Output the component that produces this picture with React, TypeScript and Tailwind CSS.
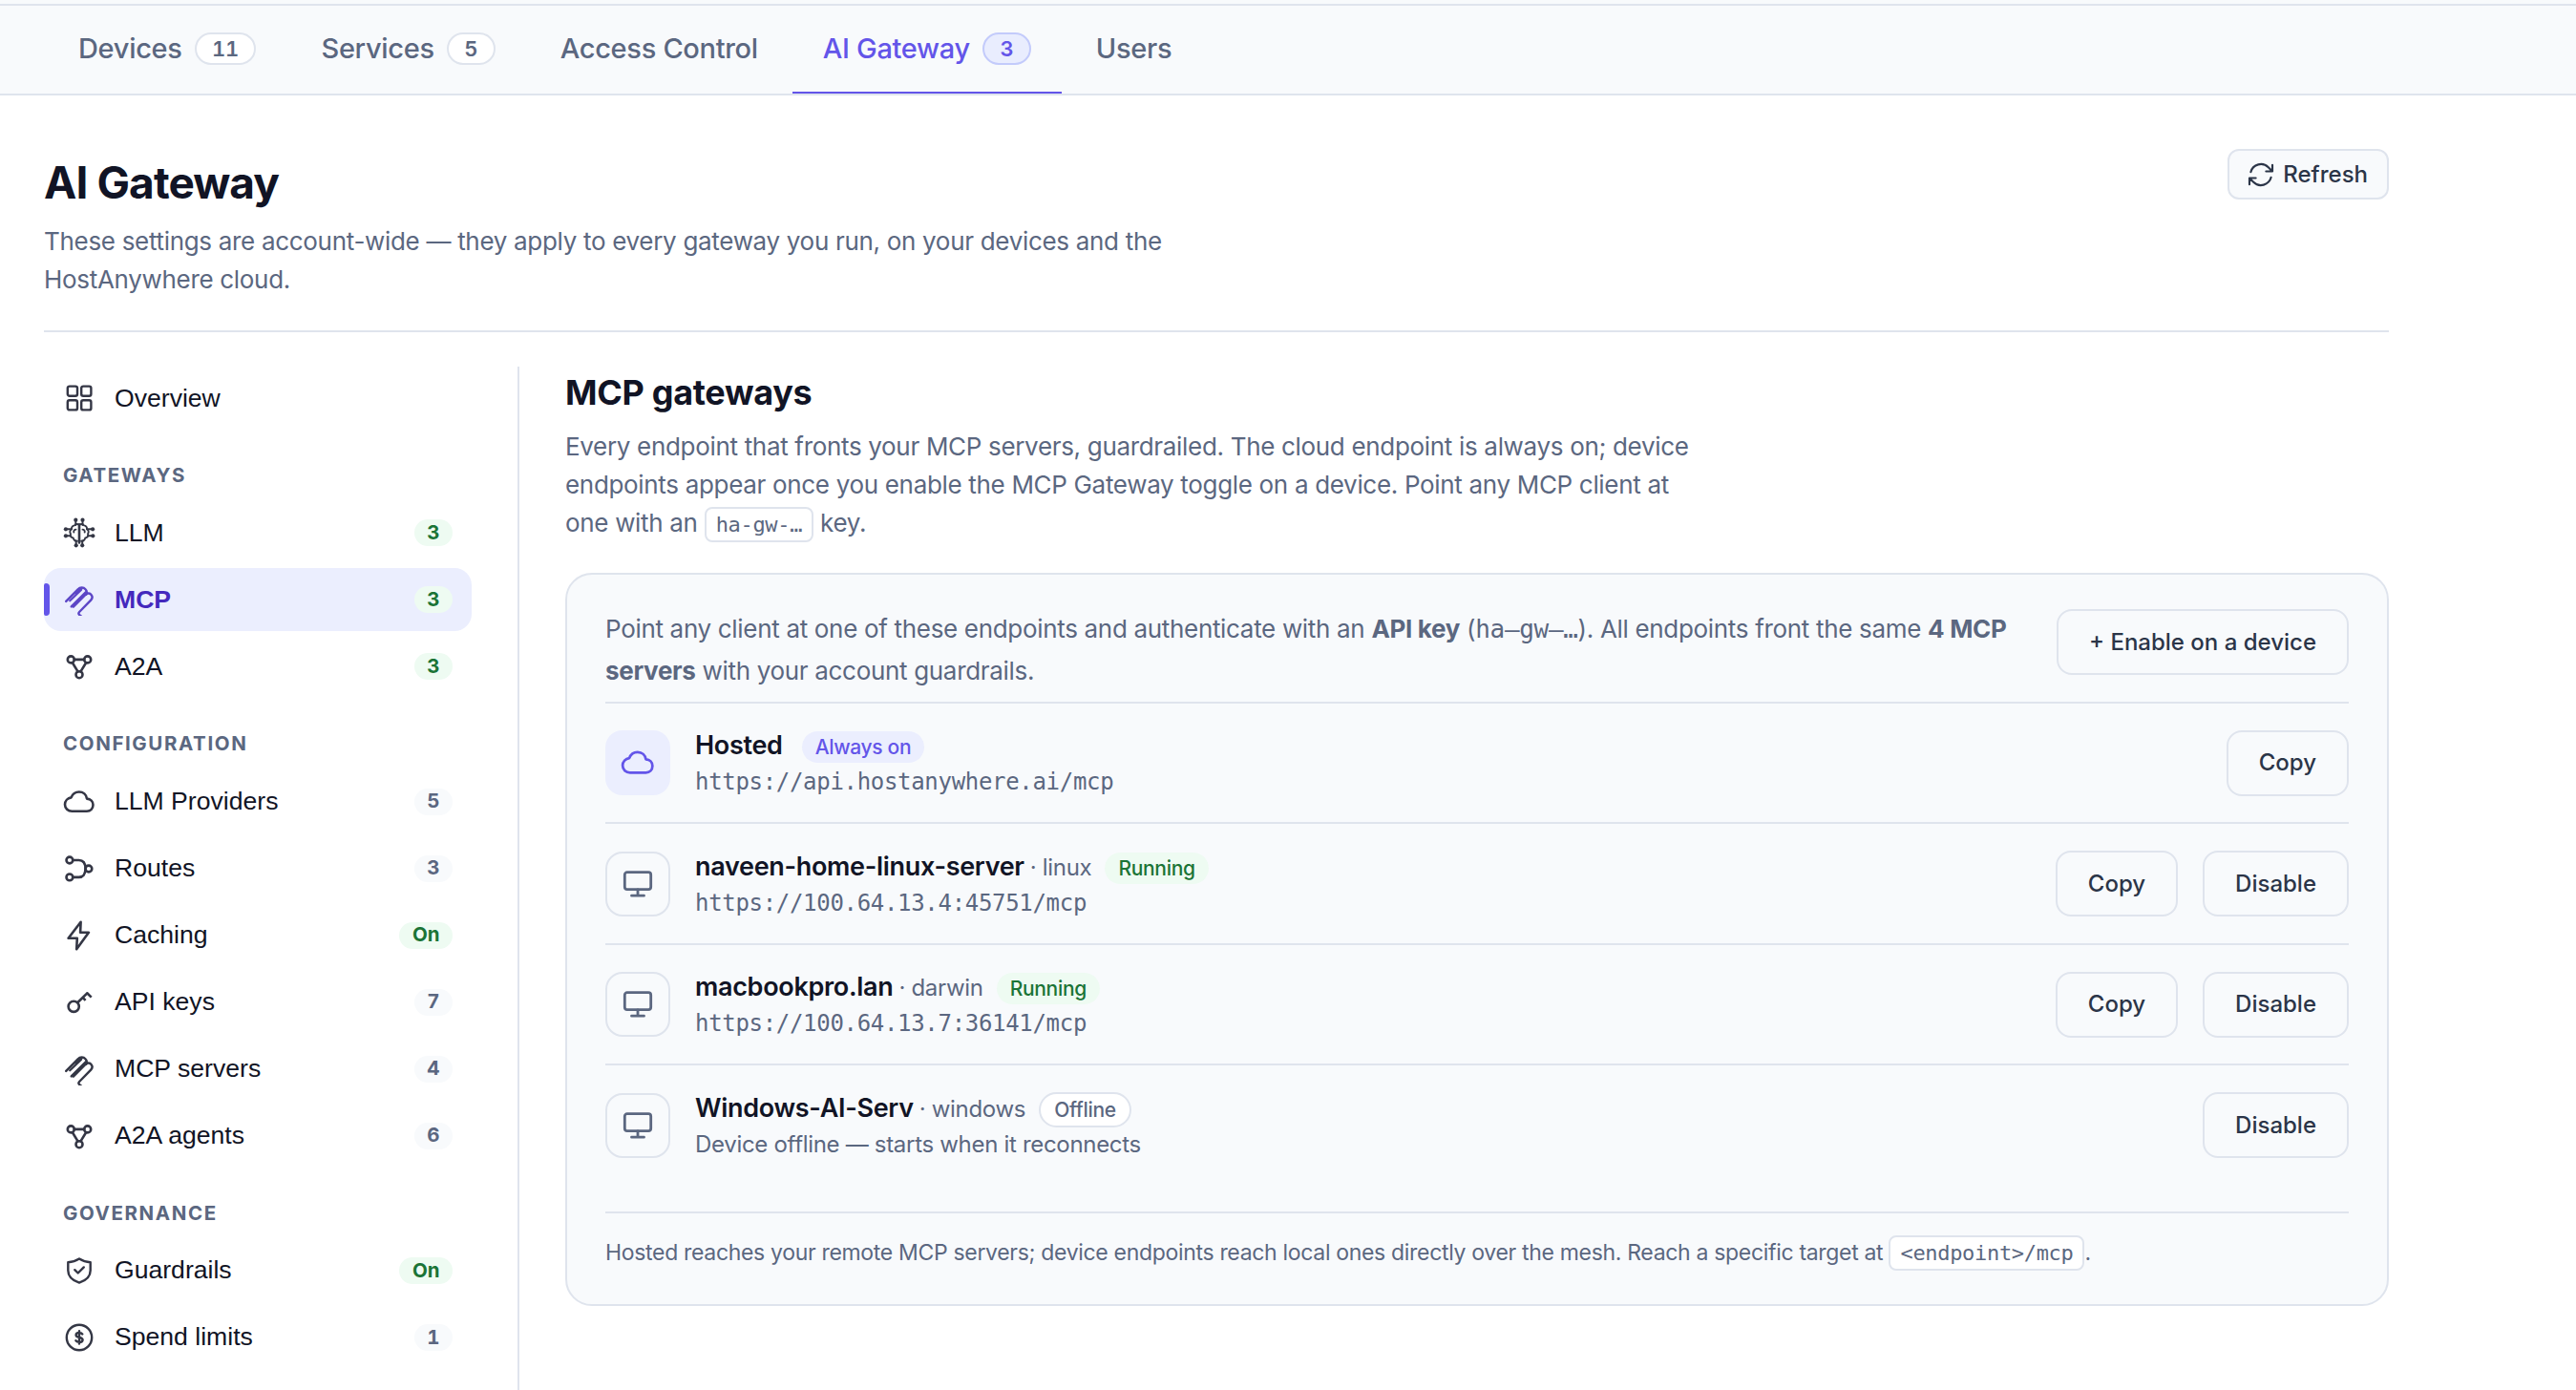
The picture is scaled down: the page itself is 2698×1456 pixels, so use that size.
import React from "react";
import clsx from "clsx";

type IconProps = { className?: string };

const strokeProps = {
  fill: "none",
  stroke: "currentColor",
  strokeWidth: 2.4,
  strokeLinecap: "round",
  strokeLinejoin: "round",
} as const;

const GridIcon = ({ className }: IconProps) => (
  <svg viewBox="0 0 34 34" className={className} {...strokeProps}>
    <rect x="4.8" y="4.6" width="10.2" height="10.2" rx="2" />
    <rect x="19.2" y="4.6" width="10.2" height="10.2" rx="2" />
    <rect x="4.8" y="19.2" width="10.2" height="10.2" rx="2" />
    <rect x="19.2" y="19.2" width="10.2" height="10.2" rx="2" />
  </svg>
);

const BrainIcon = ({ className }: IconProps) => (
  <svg viewBox="0 0 34 34" className={className} {...strokeProps} strokeWidth={1.9}>
    <path d="M17 8.5v19" strokeWidth={2.6} />
    <path d="M17 8.8c-1.6-1.4-4-1-4.9.6-2 .2-3.4 1.9-3.1 3.8-1.8 1-2.2 3.3-1.1 4.9-.4 2.2.8 4 2.8 4.4.5 2.3 2.5 3.6 4.3 3.2M17 8.8c1.6-1.4 4-1 4.9.6 2 .2 3.4 1.9 3.1 3.8 1.8 1 2.2 3.3 1.1 4.9.4 2.2-.8 4-2.8 4.4-.5 2.3-2.5 3.6-4.3 3.2" />
    <path d="M11.3 16.6c-.3-1.7.6-2.9 2.2-3M22.7 16.6c.3-1.7-.6-2.9-2.2-3" />
    <path d="M13.3 4v5M20.5 4v5M3 13.3h6M3.3 20.3h4.4M31 13.3h-6M30.7 20.3h-4.4M13.7 30v-4.5M20.2 30v-4.5" />
    <g fill="currentColor" stroke="none">
      <circle cx="13.3" cy="3.7" r="2.1" />
      <circle cx="20.5" cy="3.7" r="2.1" />
      <circle cx="2.9" cy="13.3" r="2.1" />
      <circle cx="2.9" cy="20.3" r="2.1" />
      <circle cx="31.1" cy="13.3" r="2.1" />
      <circle cx="31.3" cy="20.3" r="2.1" />
      <circle cx="13.7" cy="30.3" r="2.1" />
      <circle cx="20.2" cy="30.3" r="2.1" />
    </g>
  </svg>
);

const McpIcon = ({ className }: IconProps) => (
  <svg viewBox="0 0 34 34" className={className} {...strokeProps}>
    <path d="M3.2 18.9 15.6 6.3c2.3-2.3 5.9-2.3 7.9 0 1.5 1.6 1.6 3.7.6 5.5" />
    <path d="M7.2 18.3 19.2 6.6M13.5 10.8 19.6 5.2" strokeWidth={2.2} />
    <path d="M8.8 24.4 23.9 9.4" strokeWidth={2.6} />
    <path d="M10.8 24.6 24 11.5c1.6-1.5 4.2-1.2 5.5.4 1.5 1.8 1.3 4-.3 5.7L17.1 30c-.9 1-.8 2.3.2 3.2l1.4 1" />
  </svg>
);

const AgentsIcon = ({ className }: IconProps) => (
  <svg viewBox="0 0 34 34" className={className} {...strokeProps} strokeWidth={2.6}>
    <circle cx="8.3" cy="9.9" r="3.5" />
    <circle cx="25.7" cy="9.9" r="3.5" />
    <circle cx="17" cy="25.7" r="3.5" />
    <path d="M11.8 9.9h10.4M9.9 13.2l5.6 9.2M24.1 13.2l-5.6 9.2" />
  </svg>
);

const CloudIcon = ({ className }: IconProps) => (
  <svg viewBox="0 0 34 34" className={className} {...strokeProps} strokeWidth={2.6}>
    <path d="M9.3 26.7C5.2 26.7 2 23.7 2 19.7c0-3.8 2.9-6.8 6.6-7.3 1.4-3.7 4.4-5.9 8.2-5.9 4.5 0 7.6 3.1 8.2 7.1 3.9.2 6.5 2.9 6.5 6.5 0 3.8-2.7 6.6-6.5 6.600z" />
  </svg>
);

const RoutesIcon = ({ className }: IconProps) => (
  <svg viewBox="0 0 34 34" className={className} {...strokeProps} strokeWidth={2.6}>
    <circle cx="6.9" cy="8" r="3.4" />
    <circle cx="6.9" cy="25.9" r="3.4" />
    <circle cx="26.9" cy="17" r="3.4" />
    <path d="M10.4 8h6.2c4.3 0 6.9 3.2 6.9 9s-2.6 8.9-6.900 8.900h-6.200" />
  </svg>
);

const BoltIcon = ({ className }: IconProps) => (
  <svg viewBox="0 0 34 34" className={className} {...strokeProps} strokeWidth={2.6}>
    <path d="M18.6 2.8 5.6 19.8h9.2l-.6 11.5 12.7-17.600h-8.800z" />
  </svg>
);

const KeyIcon = ({ className }: IconProps) => (
  <svg viewBox="0 0 34 34" className={className} {...strokeProps} strokeWidth={2.6} strokeLinecap="butt">
    <circle cx="11.2" cy="21.3" r="5.6" />
    <path d="M15.2 17.3 25.8 6.9M25 7l4.7 4.6M20.6 11.8l3 3" strokeLinejoin="miter" />
  </svg>
);

const ShieldIcon = ({ className }: IconProps) => (
  <svg viewBox="0 0 34 34" className={className} {...strokeProps}>
    <path d="M17 4.5c3.5 2.3 7.4 3.5 11.7 3.8v8.4c0 6.3-4.7 10.6-11.7 12.9-7-2.3-11.7-6.6-11.7-12.9V8.3C9.6 8 13.5 6.8 17 4.5z" />
    <path d="m12.3 16.2 3.4 3.3 6.100-6.100" />
  </svg>
);

const SpendIcon = ({ className }: IconProps) => (
  <svg viewBox="0 0 34 34" className={className} {...strokeProps}>
    <circle cx="17" cy="17" r="13.2" />
    <path d="M20.3 13.4c-.8-1-2-1.4-3.4-1.4-1.9 0-3.3.9-3.3 2.4 0 3.3 7 1.5 7 5 0 1.5-1.6 2.5-3.6 2.5-1.5 0-2.8-.5-3.6-1.600M17 10.300v13.200" />
  </svg>
);

const MonitorIcon = ({ className }: IconProps) => (
  <svg viewBox="0 0 36 36" className={className} {...strokeProps} strokeWidth={2.8}>
    <rect x="4.3" y="5.7" width="27.4" height="18" rx="2.6" />
    <path d="M18 24v6.2M11.5 30.2h13" />
  </svg>
);

// heroicons arrow-path
const RefreshIcon = ({ className }: IconProps) => (
  <svg viewBox="0 0 24 24" className={className} {...strokeProps} strokeWidth={1.6}>
    <path d="M16.023 9.348h4.992v-.001M2.985 19.644v-4.992m0 0h4.992m-4.993 0 3.181 3.183a8.25 8.25 0 0 0 13.803-3.7M4.031 9.865a8.25 8.25 0 0 1 13.803-3.7l3.181 3.182m0-4.991v4.990" />
  </svg>
);

interface NavItem {
  label: string;
  icon: React.ComponentType<IconProps>;
  badge?: string;
  tone?: "green" | "muted";
  active?: boolean;
}

const TABS = [
  { label: "Devices", count: 11 },
  { label: "Services", count: 5 },
  { label: "Access Control" },
  { label: "AI Gateway", count: 3, active: true },
  { label: "Users" },
];

const NAV: { title?: string; items: NavItem[] }[] = [
  { items: [{ label: "Overview", icon: GridIcon }] },
  {
    title: "Gateways",
    items: [
      { label: "LLM", icon: BrainIcon, badge: "3", tone: "green" },
      { label: "MCP", icon: McpIcon, badge: "3", tone: "green", active: true },
      { label: "A2A", icon: AgentsIcon, badge: "3", tone: "green" },
    ],
  },
  {
    title: "Configuration",
    items: [
      { label: "LLM Providers", icon: CloudIcon, badge: "5" },
      { label: "Routes", icon: RoutesIcon, badge: "3" },
      { label: "Caching", icon: BoltIcon, badge: "On", tone: "green" },
      { label: "API keys", icon: KeyIcon, badge: "7" },
      { label: "MCP servers", icon: McpIcon, badge: "4" },
      { label: "A2A agents", icon: AgentsIcon, badge: "6" },
    ],
  },
  {
    title: "Governance",
    items: [
      { label: "Guardrails", icon: ShieldIcon, badge: "On", tone: "green" },
      { label: "Spend limits", icon: SpendIcon, badge: "1" },
    ],
  },
];

interface Endpoint {
  name: string;
  os?: string;
  status: "Always on" | "Running" | "Offline";
  url?: string;
  actions: string[];
}

const ENDPOINTS: Endpoint[] = [
  { name: "Hosted", status: "Always on", url: "https://api.hostanywhere.ai/mcp", actions: ["Copy"] },
  {
    name: "naveen-home-linux-server",
    os: "linux",
    status: "Running",
    url: "https://100.64.13.4:45751/mcp",
    actions: ["Copy", "Disable"],
  },
  {
    name: "macbookpro.lan",
    os: "darwin",
    status: "Running",
    url: "https://100.64.13.7:36141/mcp",
    actions: ["Copy", "Disable"],
  },
  { name: "Windows-AI-Serv", os: "windows", status: "Offline", actions: ["Disable"] },
];

const TopTabs = () => (
  <div className="h-[100px] bg-[#f8fafc] border-b-2 border-[#dfe4ed] pt-1">
    <div className="h-[94px] border-t-2 border-[#dfe4ed] flex gap-1 pl-[50px]">
      {TABS.map(({ label, count, active }) => (
        <div
          key={label}
          className={clsx(
            "h-[92px] px-8 flex items-center gap-[13px] border-b-2 text-[29px] font-medium",
            active ? "text-[#6355e9] border-[#6355e9]" : "text-[#5b6780] border-transparent"
          )}
        >
          <span>{label}</span>
          {count !== undefined && (
            <span
              className={clsx(
                "h-[34px] px-[16.5px] rounded-full border-2 flex items-center text-[22px] font-semibold tabular-nums",
                active ? "bg-[#e9edfe] border-[#c3cbfb]" : "bg-white border-[#dfe4ed]"
              )}
            >
              {count}
            </span>
          )}
        </div>
      ))}
    </div>
  </div>
);

const SideItem = ({ label, icon: Icon, badge, tone = "muted", active }: NavItem) => (
  <div
    className={clsx(
      "relative h-[66px] px-5 rounded-[18px] flex items-center gap-5 overflow-hidden tracking-normal",
      active ? "bg-[#ebeefe] text-[#4429bd] font-bold" : "text-[#111425]"
    )}
  >
    {active && <span className="absolute left-0 top-4 h-[34px] w-[6px] rounded-r-[4px] rounded-l-[2px] bg-[#6355e9]" />}
    <Icon className="size-[34px] shrink-0 opacity-85" />
    <span className="flex-1 pt-px text-[26.6px] font-['Liberation_Sans',Arial,sans-serif]">{label}</span>
    {badge && (
      <span
        className={clsx(
          "h-7 px-[13.5px] rounded-full flex items-center text-[20.5px] font-bold tabular-nums",
          tone === "green" ? "bg-[#eefbf2] text-[#1b7436]" : "bg-[#f8fafc] text-[#5b6780]"
        )}
      >
        {badge}
      </span>
    )}
  </div>
);

const Sidebar = () => (
  <aside className="w-[498px] shrink-0 min-h-[1072px] border-r-2 border-[#dfe4ed] pr-12">
    {NAV.map(({ title, items }, i) => (
      <div key={i}>
        {title && (
          <h3 className="h-[75.3px] px-5 pt-[35px] text-[20.5px] leading-[26px] font-bold uppercase tracking-[1.6px] text-[#5b6780]">
            {title}
          </h3>
        )}
        <div className="flex flex-col gap-1">
          {items.map((item) => (
            <SideItem key={item.label} {...item} />
          ))}
        </div>
      </div>
    ))}
  </aside>
);

const Code = ({ children }: { children: React.ReactNode }) => (
  <code className="inline-block h-[37px] px-[10px] rounded-lg border-2 border-[#dfe4ed] bg-white text-[22px] leading-[34px] align-baseline font-['DejaVu_Sans_Mono',monospace]">
    {children}
  </code>
);

const ActionButton = ({ children }: { children: React.ReactNode }) => (
  <button className="h-[69px] px-8 rounded-2xl border-2 border-[#dfe4ed] text-[24px] font-medium tracking-normal text-[#2b3548] whitespace-nowrap">
    {children}
  </button>
);

const StatusPill = ({ status }: { status: Endpoint["status"] }) => (
  <span
    className={clsx(
      "inline-flex items-center rounded-full px-[14px] text-[21px] font-medium",
      status === "Always on" && "h-[33px] bg-[#ebeefe] text-[#6355e9]",
      status === "Running" && "h-[33px] bg-[#eefbf2] text-[#1b7436]",
      status === "Offline" && "h-[37px] border-2 border-[#dfe4ed] bg-white text-[#5b6780]"
    )}
  >
    {status}
  </span>
);

const EndpointRow = ({ name, os, status, url, actions }: Endpoint) => (
  <div className="h-[126.5px] border-t-2 border-[#dfe4ed] flex items-center">
    <div
      className={clsx(
        "size-[68px] rounded-[18px] shrink-0 flex items-center justify-center",
        os ? "border-2 border-[#dfe4ed] text-[#5b6780]" : "bg-[#ebeefe] text-[#6355e9]"
      )}
    >
      {os ? <MonitorIcon className="size-9" /> : <CloudIcon className="size-9" />}
    </div>
    <div className="flex-1 ml-[26px] flex flex-col">
      <div className="h-10 flex items-baseline">
        <span className="text-[27px] font-semibold text-[#111425]">{name}</span>
        {os && <span className="ml-[6px] text-[24px] text-[#5b6780]">· {os}</span>}
        <span className={os ? "ml-[14px]" : "ml-5"}>
          <StatusPill status={status} />
        </span>
      </div>
      {url ? (
        <span className="text-[24px] leading-[36px] text-[#5b6780] font-['DejaVu_Sans_Mono',monospace]">{url}</span>
      ) : (
        <span className="text-[24px] leading-[36px] text-[#5b6780]">Device offline — starts when it reconnects</span>
      )}
    </div>
    <div className="flex gap-[26px]">
      {actions.map((a) => (
        <ActionButton key={a}>{a}</ActionButton>
      ))}
    </div>
  </div>
);

const GatewayCard = () => (
  <div className="mt-[31px] h-[768px] rounded-[28px] border-2 border-[#dfe4ed] bg-[#f8fafc] px-10 pt-[35px]">
    <div className="h-[97.9px] flex items-start justify-between">
      <p className="w-[1490px] text-[26px] leading-[43px] tracking-[-0.32px] text-[#5b6780]">
        Point any client at one of these endpoints and authenticate with an <b>API key</b> (
        <span className="font-['DejaVu_Sans_Mono',monospace]">ha–gw–…</span>). All endpoints front the same{" "}
        <b>4 MCP servers</b> with your account guardrails.
      </p>
      <div className="pt-px">
        <ActionButton>+ Enable on a device</ActionButton>
      </div>
    </div>
    {ENDPOINTS.map((e) => (
      <EndpointRow key={e.name} {...e} />
    ))}
    <div className="mt-[28.1px] pt-[21px] border-t-2 border-[#dfe4ed] text-[23px] leading-[40px] tracking-[-0.32px] text-[#5b6780]">
      Hosted reaches your remote MCP servers; device endpoints reach local ones directly over the mesh. Reach a specific
      target at <Code>&lt;endpoint&gt;/mcp</Code>.
    </div>
  </div>
);

export default function App() {
  return (
    <div className="h-[1456px] overflow-hidden bg-white font-['Inter',sans-serif] tracking-[-0.31px]">
      <TopTabs />
      <div className="ml-[46px] w-[2456px]">
        <header className="h-[248px] pt-14 border-b-2 border-[#dfe4ed] flex items-start justify-between">
          <div>
            <h1 className="pt-px text-[46px] leading-[68px] font-bold tracking-[-0.9px] text-[#111425]">AI Gateway</h1>
            <p className="mt-2 text-[26px] leading-[40px] text-[#5b6780]">
              These settings are account-wide — they apply to every gateway you run, on your devices and the
              <br />
              HostAnywhere cloud.
            </p>
          </div>
          <button className="h-[53px] pl-[17px] pr-5 rounded-xl border-2 border-[#dfe4ed] bg-[#f8fafc] flex items-center gap-[7px] text-[24px] font-medium tracking-normal text-[#2b3548]">
            <RefreshIcon className="size-8" />
            Refresh
          </button>
        </header>
        <div className="flex pt-9">
          <Sidebar />
          <main className="flex-1 pl-12">
            <h2 className="h-[64px] pt-[5px] text-[36px] leading-[44px] font-bold text-[#111425]">MCP gateways</h2>
            <p className="h-[121px] text-[26px] leading-[40px] tracking-[-0.32px] text-[#5b6780]">
              Every endpoint that fronts your MCP servers, guardrailed. The cloud endpoint is always on; device
              <br />
              endpoints appear once you enable the MCP Gateway toggle on a device. Point any MCP client at
              <br />
              one with an <Code>ha-gw-…</Code> key.
            </p>
            <GatewayCard />
          </main>
        </div>
      </div>
    </div>
  );
}
